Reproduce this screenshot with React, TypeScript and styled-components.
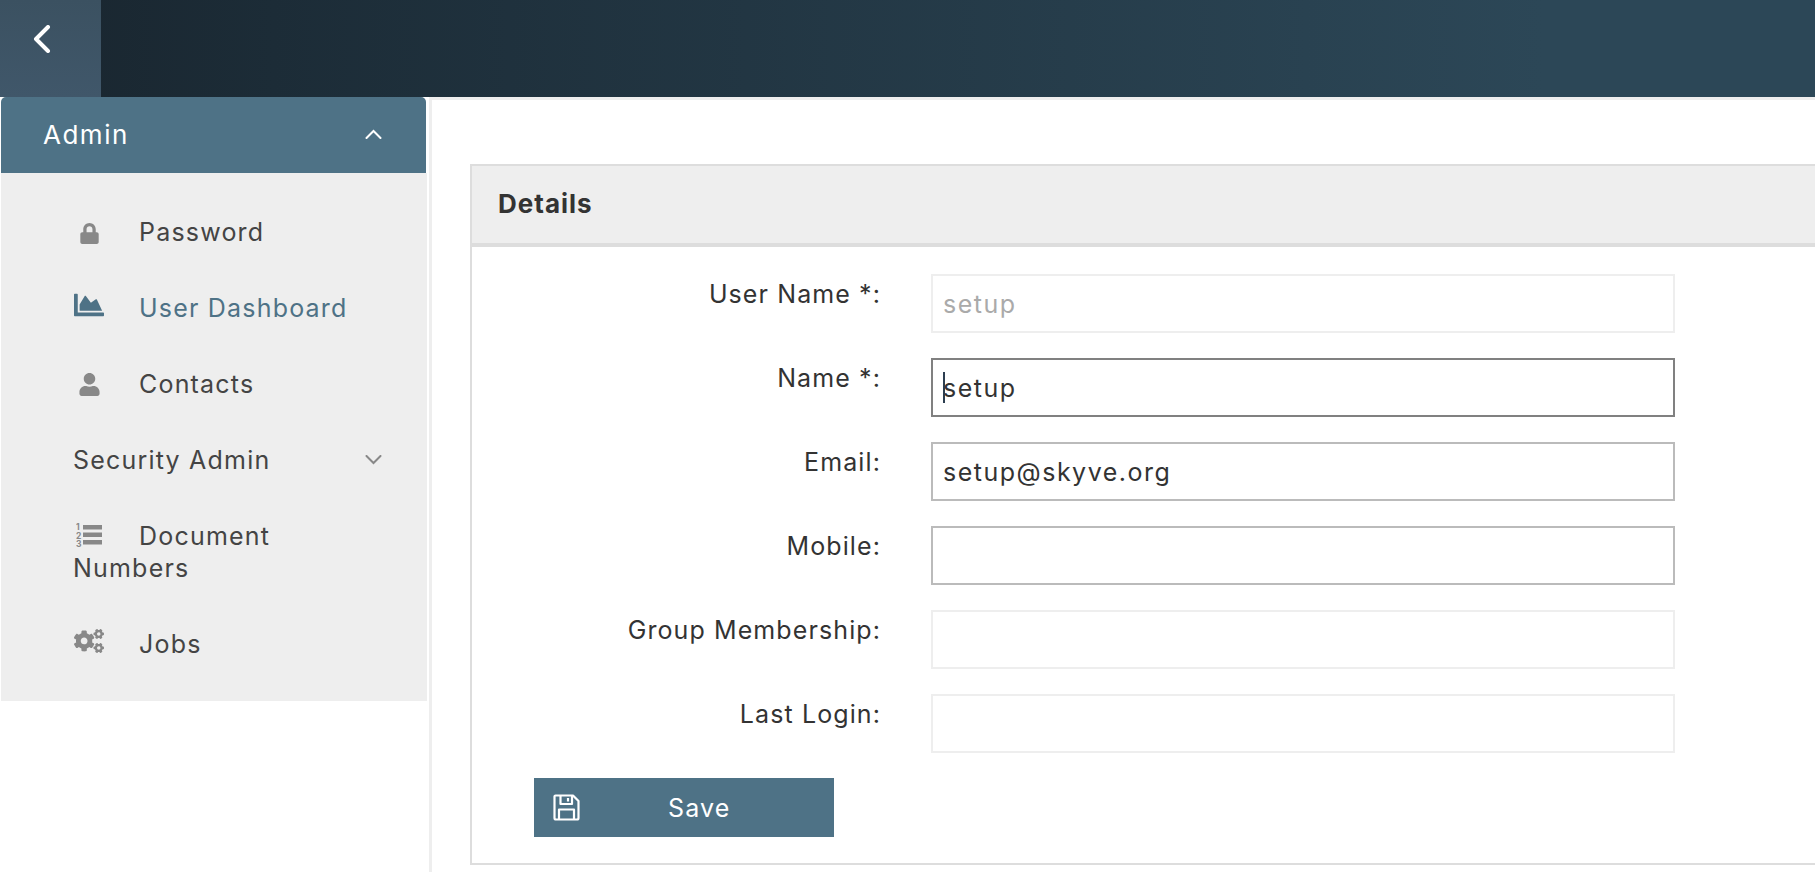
import React from 'react';
import styled, { createGlobalStyle } from 'styled-components';
import { FaChartArea, FaCogs, FaLock, FaUser } from 'react-icons/fa';

const Global = createGlobalStyle`
  html, body { margin: 0; padding: 0; background: #fff; height: 100%; overflow: hidden; }
  * { box-sizing: border-box; }
  body { font-family: Inter, "Open Sans", "Liberation Sans", sans-serif; color: #333; }
`;

const Page = styled.div`
  width: 1815px;
  height: 872px;
  display: flex;
  flex-direction: column;
  overflow: hidden;
`;

const Header = styled.header`
  height: 97px;
  flex: none;
  display: flex;
  background: linear-gradient(to right, #19252e 0%, #1c2c37 15%, #2c4757 85%, #2c4757 100%);
`;

const BackButton = styled.button`
  width: 101px;
  height: 100%;
  border: 0;
  padding: 0 0 20px 33px;
  background: linear-gradient(to bottom, #3b5161, #40576a);
  display: flex;
  align-items: center;
  justify-content: flex-start;
  color: #fff;
`;

const Body = styled.div`
  flex: 1;
  display: flex;
  min-height: 0;
`;

const Sidebar = styled.nav`
  width: 428px;
  margin-left: 1px;
  flex: none;
  align-self: flex-start;
`;

const MenuHead = styled.div`
  height: 76px;
  background: #4e7286;
  border-radius: 5px 5px 0 0;
  width: 425px;
  padding: 0 44px 2px 42px;
  display: flex;
  align-items: center;
  justify-content: space-between;
  color: #fff;
  font-size: 26px;
  letter-spacing: 1.5px;
`;

const MenuBody = styled.div`
  width: 426px;
  background: #eee;
  padding: 21px 0 19px;
`;

const MenuItem = styled.div<{ $active?: boolean; $split?: boolean }>`
  padding: 22px 45px 22px 72px;
  font-size: 25px;
  line-height: 32px;
  letter-spacing: 1.2px;
  color: ${p => (p.$active ? '#4e7286' : '#444')};
  display: ${p => (p.$split ? 'flex' : 'block')};
  justify-content: space-between;
  align-items: center;
`;

const ItemIcon = styled.span<{ $active?: boolean }>`
  display: inline-block;
  width: 66px;
  height: 24px;
  vertical-align: -3px;
  color: ${p => (p.$active ? '#4e7286' : '#888')};
`;

const IconSlot = styled.span`
  display: flex;
  align-items: center;
  justify-content: center;
  width: 32px;
  height: 24px;
`;

const Divider = styled.div`
  width: 3px;
  flex: none;
  background: #eee;
`;

const Main = styled.main`
  flex: 1;
  min-width: 0;
  border-top: 3px solid #eee;
  padding: 64px 0 0 38px;
`;

const Panel = styled.section`
  height: 701px;
  border: 2px solid #ddd;
  border-right: 0;
`;

const PanelHead = styled.h2`
  margin: 0;
  height: 81px;
  background: #eee;
  border-bottom: 4px solid #ddd;
  padding: 0 0 2px 26px;
  display: flex;
  align-items: center;
  font-size: 26px;
  font-weight: 700;
  letter-spacing: 1px;
  color: #333;
`;

const Form = styled.div`
  padding: 27px 0 0 0;
  display: grid;
  grid-template-columns: 409px 744px;
  column-gap: 50px;
  row-gap: 25px;
  grid-auto-rows: 59px;
  justify-content: start;
`;

const Label = styled.label`
  text-align: right;
  font-size: 25px;
  line-height: 32px;
  padding-top: 4px;
  letter-spacing: 1.1px;
  color: #333;
`;

const FieldBox = styled.div`
  position: relative;
`;

const Input = styled.input<{ $tone: string; $muted?: boolean }>`
  width: 100%;
  height: 59px;
  border: 2px solid ${p => p.$tone};
  background: #fff;
  border-radius: 0;
  outline: none;
  padding: 0 0 0 10px;
  font: 400 25px Inter, "Open Sans", sans-serif;
  letter-spacing: 1.5px;
  color: ${p => (p.$muted ? '#aaa' : '#333')};
`;

const Caret = styled.span`
  position: absolute;
  left: 12px;
  top: 14px;
  width: 2px;
  height: 31px;
  background: #2c3e50;
`;

const Actions = styled.div`
  padding: 25px 0 0 62px;
`;

const SaveButton = styled.button`
  width: 300px;
  height: 59px;
  border: 0;
  background: #4e7286;
  color: #fff;
  display: flex;
  align-items: center;
  padding: 0 0 0 19px;
  font: 400 25px Inter, "Open Sans", sans-serif;
  letter-spacing: 1.2px;
`;

const SaveLabel = styled.span`
  margin-left: 88px;
`;

const Chevron = ({ dir, color }: { dir: 'up' | 'down'; color: string }) => (
  <svg width="17" height="10" viewBox="0 0 17 10" fill="none" stroke={color} strokeWidth="2" strokeLinecap="round">
    <polyline points={dir === 'up' ? '1.5,9 8.5,2 15.5,9' : '1.5,1 8.5,8 15.5,1'} />
  </svg>
);

const NumberedList = () => (
  <svg width="26" height="26" viewBox="0 0 26 26" fill="#888">
    <rect x="7" y="3" width="19" height="4.5" />
    <rect x="7" y="10.5" width="19" height="4.5" />
    <rect x="7" y="18" width="19" height="4.5" />
    <text x="0" y="8" fontSize="8.5" fontWeight="700" fontFamily="Inter, sans-serif">1</text>
    <text x="0" y="16.5" fontSize="8.5" fontWeight="700" fontFamily="Inter, sans-serif">2</text>
    <text x="0" y="25" fontSize="8.5" fontWeight="700" fontFamily="Inter, sans-serif">3</text>
  </svg>
);

const Floppy = () => (
  <svg width="27" height="27" viewBox="0 0 27 27" fill="none" stroke="#fff" strokeWidth="2.2" strokeLinejoin="round">
    <path d="M2.5 1.5H20L25.5 7V24a1.5 1.5 0 0 1-1.5 1.5H3A1.5 1.5 0 0 1 1.5 24V2.5a1 1 0 0 1 1-1Z" />
    <path d="M7.5 1.5V10H19V1.5" />
    <path d="M15 4V7.5" />
    <path d="M6 25.5V15.5H21V25.5" />
  </svg>
);

const fields = [
  { label: 'User Name *:', value: 'setup', tone: '#eee', muted: true },
  { label: 'Name *:', value: 'setup', tone: '#808080', caret: true },
  { label: 'Email:', value: 'setup@skyve.org', tone: '#bbb' },
  { label: 'Mobile:', value: '', tone: '#bbb' },
  { label: 'Group Membership:', value: '', tone: '#eee' },
  { label: 'Last Login:', value: '', tone: '#eee' },
];

export default function App() {
  return (
    <Page>
      <Global />
      <Header>
        <BackButton aria-label="Back">
          <svg width="18" height="28" viewBox="0 0 18 28" fill="none" stroke="#fff" strokeWidth="4" strokeLinecap="round" strokeLinejoin="round">
            <polyline points="15,2 3,14 15,26" />
          </svg>
        </BackButton>
      </Header>
      <Body>
        <Sidebar>
          <MenuHead>
            Admin
            <Chevron dir="up" color="#fff" />
          </MenuHead>
          <MenuBody>
            <MenuItem><ItemIcon><IconSlot><FaLock size={21} /></IconSlot></ItemIcon>Password</MenuItem>
            <MenuItem $active><ItemIcon $active><IconSlot><FaChartArea size={30} /></IconSlot></ItemIcon>User Dashboard</MenuItem>
            <MenuItem><ItemIcon><IconSlot><FaUser size={23} /></IconSlot></ItemIcon>Contacts</MenuItem>
            <MenuItem $split>Security Admin<Chevron dir="down" color="#888" /></MenuItem>
            <MenuItem><ItemIcon><IconSlot><NumberedList /></IconSlot></ItemIcon>Document Numbers</MenuItem>
            <MenuItem><ItemIcon><IconSlot><FaCogs size={30} /></IconSlot></ItemIcon>Jobs</MenuItem>
          </MenuBody>
        </Sidebar>
        <Divider />
        <Main>
          <Panel>
            <PanelHead>Details</PanelHead>
            <Form>
              {fields.map(f => (
                <React.Fragment key={f.label}>
                  <Label>{f.label}</Label>
                  <FieldBox>
                    <Input readOnly value={f.value} $tone={f.tone} $muted={f.muted} />
                    {f.caret && <Caret />}
                  </FieldBox>
                </React.Fragment>
              ))}
            </Form>
            <Actions>
              <SaveButton>
                <Floppy />
                <SaveLabel>Save</SaveLabel>
              </SaveButton>
            </Actions>
          </Panel>
        </Main>
      </Body>
    </Page>
  );
}
